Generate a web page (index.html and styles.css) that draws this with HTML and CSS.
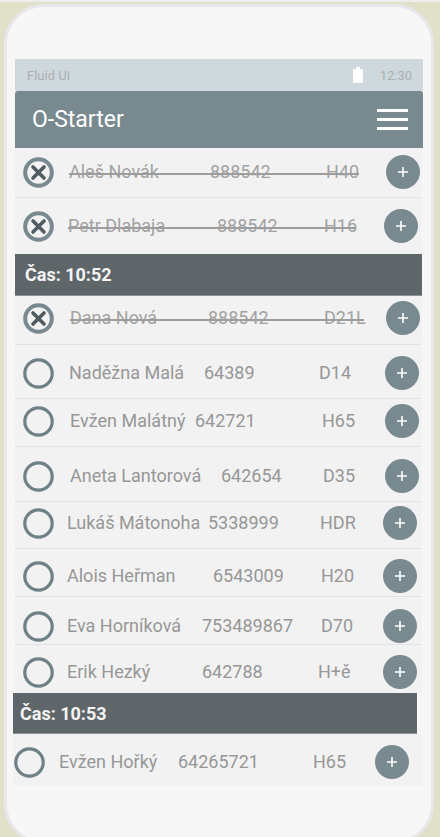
FILE: index.html
```html
<!DOCTYPE html>
<html lang="cs">
<head>
<meta charset="utf-8">
<title>O-Starter</title>
<link rel="stylesheet" href="styles.css">
</head>
<body>
<div class="frame">
  <div class="screen">
    <div class="statusbar">
      <span class="brand">Fluid UI</span>
      <span class="status-right">
        <svg class="battery" width="10" height="16" viewBox="0 0 10 16"><rect x="3" y="0" width="4" height="2" fill="#fff"/><rect x="0" y="2" width="10" height="14" rx="1" fill="#fff"/></svg>
        <span class="clock">12:30</span>
      </span>
    </div>
    <div class="appbar">
      <span class="title">O-Starter</span>
      <svg class="menu" width="31" height="22" viewBox="0 0 31 22"><rect x="0" y="0" width="31" height="3" fill="#fff"/><rect x="0" y="9" width="31" height="3" fill="#fff"/><rect x="0" y="18" width="31" height="3" fill="#fff"/></svg>
    </div>

    <div class="list">
      <div class="row r1 done">
        <svg class="mark" viewBox="0 0 31 31"><circle cx="15.5" cy="15.5" r="13.3" fill="none" stroke="#78898f" stroke-width="4"/><path d="M10 10 L21 21 M21 10 L10 21" stroke="#4f5b60" stroke-width="3.6" stroke-linecap="round"/></svg>
        <span class="name">Aleš Novák</span><span class="num">888542</span><span class="cat">H40</span>
        <span class="add"><svg viewBox="0 0 34 34"><path d="M17 12 V22 M12 17 H22" stroke="#fff" stroke-width="1.6"/></svg></span>
      </div>
      <div class="row r2 done">
        <svg class="mark" viewBox="0 0 31 31"><circle cx="15.5" cy="15.5" r="13.3" fill="none" stroke="#78898f" stroke-width="4"/><path d="M10 10 L21 21 M21 10 L10 21" stroke="#4f5b60" stroke-width="3.6" stroke-linecap="round"/></svg>
        <span class="name">Petr Dlabaja</span><span class="num">888542</span><span class="cat">H16</span>
        <span class="add"><svg viewBox="0 0 34 34"><path d="M17 12 V22 M12 17 H22" stroke="#fff" stroke-width="1.6"/></svg></span>
      </div>
      <div class="section s1">Čas: 10:52</div>
      <div class="row r3 done">
        <svg class="mark" viewBox="0 0 31 31"><circle cx="15.5" cy="15.5" r="13.3" fill="none" stroke="#78898f" stroke-width="4"/><path d="M10 10 L21 21 M21 10 L10 21" stroke="#4f5b60" stroke-width="3.6" stroke-linecap="round"/></svg>
        <span class="name">Dana Nová</span><span class="num">888542</span><span class="cat">D21L</span>
        <span class="add"><svg viewBox="0 0 34 34"><path d="M17 12 V22 M12 17 H22" stroke="#fff" stroke-width="1.6"/></svg></span>
      </div>
      <div class="row r4">
        <svg class="mark" viewBox="0 0 31 31"><circle cx="15.5" cy="15.5" r="13.7" fill="none" stroke="#6e8187" stroke-width="3.2"/></svg>
        <span class="name">Naděžna Malá</span><span class="num">64389</span><span class="cat">D14</span>
        <span class="add"><svg viewBox="0 0 34 34"><path d="M17 12 V22 M12 17 H22" stroke="#fff" stroke-width="1.6"/></svg></span>
      </div>
      <div class="row r5">
        <svg class="mark" viewBox="0 0 31 31"><circle cx="15.5" cy="15.5" r="13.7" fill="none" stroke="#6e8187" stroke-width="3.2"/></svg>
        <span class="name">Evžen Malátný</span><span class="num">642721</span><span class="cat">H65</span>
        <span class="add"><svg viewBox="0 0 34 34"><path d="M17 12 V22 M12 17 H22" stroke="#fff" stroke-width="1.6"/></svg></span>
      </div>
      <div class="row r6">
        <svg class="mark" viewBox="0 0 31 31"><circle cx="15.5" cy="15.5" r="13.7" fill="none" stroke="#6e8187" stroke-width="3.2"/></svg>
        <span class="name">Aneta Lantorová</span><span class="num">642654</span><span class="cat">D35</span>
        <span class="add"><svg viewBox="0 0 34 34"><path d="M17 12 V22 M12 17 H22" stroke="#fff" stroke-width="1.6"/></svg></span>
      </div>
      <div class="row r7">
        <svg class="mark" viewBox="0 0 31 31"><circle cx="15.5" cy="15.5" r="13.7" fill="none" stroke="#6e8187" stroke-width="3.2"/></svg>
        <span class="name">Lukáš Mátonoha</span><span class="num">5338999</span><span class="cat">HDR</span>
        <span class="add"><svg viewBox="0 0 34 34"><path d="M17 12 V22 M12 17 H22" stroke="#fff" stroke-width="1.6"/></svg></span>
      </div>
      <div class="row r8">
        <svg class="mark" viewBox="0 0 31 31"><circle cx="15.5" cy="15.5" r="13.7" fill="none" stroke="#6e8187" stroke-width="3.2"/></svg>
        <span class="name">Alois Heřman</span><span class="num">6543009</span><span class="cat">H20</span>
        <span class="add"><svg viewBox="0 0 34 34"><path d="M17 12 V22 M12 17 H22" stroke="#fff" stroke-width="1.6"/></svg></span>
      </div>
      <div class="row r9">
        <svg class="mark" viewBox="0 0 31 31"><circle cx="15.5" cy="15.5" r="13.7" fill="none" stroke="#6e8187" stroke-width="3.2"/></svg>
        <span class="name">Eva Horníková</span><span class="num">753489867</span><span class="cat">D70</span>
        <span class="add"><svg viewBox="0 0 34 34"><path d="M17 12 V22 M12 17 H22" stroke="#fff" stroke-width="1.6"/></svg></span>
      </div>
      <div class="row r10">
        <svg class="mark" viewBox="0 0 31 31"><circle cx="15.5" cy="15.5" r="13.7" fill="none" stroke="#6e8187" stroke-width="3.2"/></svg>
        <span class="name">Erik Hezký</span><span class="num">642788</span><span class="cat">H+ě</span>
        <span class="add"><svg viewBox="0 0 34 34"><path d="M17 12 V22 M12 17 H22" stroke="#fff" stroke-width="1.6"/></svg></span>
      </div>
      <div class="section s2">Čas: 10:53</div>
      <div class="row r11">
        <svg class="mark" viewBox="0 0 31 31"><circle cx="15.5" cy="15.5" r="13.7" fill="none" stroke="#6e8187" stroke-width="3.2"/></svg>
        <span class="name">Evžen Hořký</span><span class="num">64265721</span><span class="cat">H65</span>
        <span class="add"><svg viewBox="0 0 34 34"><path d="M17 12 V22 M12 17 H22" stroke="#fff" stroke-width="1.6"/></svg></span>
      </div>
    </div>
  </div>
</div>
</body>
</html>
```

FILE: styles.css
```css
* { box-sizing: border-box; }

html, body {
  margin: 0;
  padding: 0;
  height: 837px;
  overflow: hidden;
}

body {
  background: #e1e0c9;
  border-top: 2px solid #eeeeea;
  font-family: Roboto, "Noto Sans", sans-serif;
}

.frame {
  margin: 2px 0 0 4px;
  width: 430px;
  height: 840px;
  background: #f7f7f7;
  border: 3px solid #e8e8ec;
  border-radius: 40px;
  padding: 52px 0 0 8px;
}

.screen {
  width: 408px;
}

.statusbar {
  height: 32px;
  background: #cfd8dc;
  display: flex;
  align-items: center;
  justify-content: space-between;
  padding: 0 11px 0 12px;
  color: #a8b1b5;
  font-size: 13px;
}

.status-right {
  display: flex;
  align-items: center;
  gap: 17px;
}

.battery { display: block; }

.appbar {
  height: 57px;
  background: #78898f;
  border-radius: 3px 3px 0 0;
  display: flex;
  align-items: center;
  justify-content: space-between;
  padding: 0 15px 0 17px;
}

.title {
  color: #fff;
  font-size: 23px;
}

.menu { display: block; }

.list {
  width: 407px;
}

.row {
  --i: 8px;
  position: relative;
  display: grid;
  grid-template-columns:
    calc(var(--n) - var(--i))
    calc(var(--m) - var(--n))
    calc(var(--c) - var(--m))
    calc(var(--b) - 17px - var(--c))
    34px;
  grid-template-rows: 34px;
  align-items: center;
  height: var(--h);
  padding-left: var(--i);
  padding-top: calc(var(--cy) - 17px);
  background: #f2f2f2;
  border-bottom: 1px solid #e3e3e3;
  color: #979797;
  font-size: 18px;
  white-space: nowrap;
}

.mark {
  width: 31px;
  height: 31px;
  display: block;
}

.name, .num, .cat {
  line-height: 34px;
}

.add {
  width: 34px;
  height: 34px;
  border-radius: 50%;
  background: #78898f;
  display: block;
}

.add svg {
  width: 34px;
  height: 34px;
  display: block;
}

.done .name, .done .num, .done .cat {
  color: #a2a2a2;
}

.done::after {
  content: "";
  position: absolute;
  left: var(--n);
  width: calc(var(--e) - var(--n));
  top: calc(var(--cy) + 1px);
  height: 1.5px;
  background: #9d9d9d;
}

.r1  { --n: 54px; --m: 195px; --c: 311px; --b: 388px; --e: 344px; --h: 50px; --cy: 24px; }
.r2  { --n: 53px; --m: 202px; --c: 309px; --b: 386px; --e: 341px; --h: 56px; --cy: 28px; border-bottom: none; }
.r3  { --n: 55px; --m: 193px; --c: 309px; --b: 388px; --e: 349px; --h: 49px; --cy: 22px; }
.r4  { --n: 54px; --m: 189px; --c: 304px; --b: 387px; --h: 54px; --cy: 28px; }
.r5  { --n: 55px; --m: 180px; --c: 307px; --b: 387px; --h: 48px; --cy: 22px; }
.r6  { --n: 55px; --m: 206px; --c: 308px; --b: 387px; --h: 55px; --cy: 29px; }
.r7  { --n: 52px; --m: 193px; --c: 305px; --b: 385px; --h: 47px; --cy: 21px; }
.r8  { --n: 52px; --m: 198px; --c: 306px; --b: 385px; --h: 48px; --cy: 27px; }
.r9  { --n: 52px; --m: 187px; --c: 306px; --b: 385px; --h: 48px; --cy: 29px; }
.r10 { --n: 52px; --m: 187px; --c: 303px; --b: 385px; --h: 48px; --cy: 27px; border-bottom: none; }
.r11 {
  --i: 1px;
  --n: 46px; --m: 165px; --c: 300px; --b: 379px; --h: 52px; --cy: 28px;
  width: 409px;
  margin-left: -2px;
  border-bottom: none;
}

.section {
  background: #5f6669;
  color: #f4f4f4;
  font-weight: bold;
  font-size: 18px;
  display: flex;
  align-items: center;
}

.s1 {
  height: 42px;
  padding-left: 10px;
  border-bottom: 1px solid #8b9295;
}

.s2 {
  height: 41px;
  width: 404px;
  margin-left: -2px;
  padding-left: 7px;
  border-bottom: 1px solid #8b9295;
}
```
